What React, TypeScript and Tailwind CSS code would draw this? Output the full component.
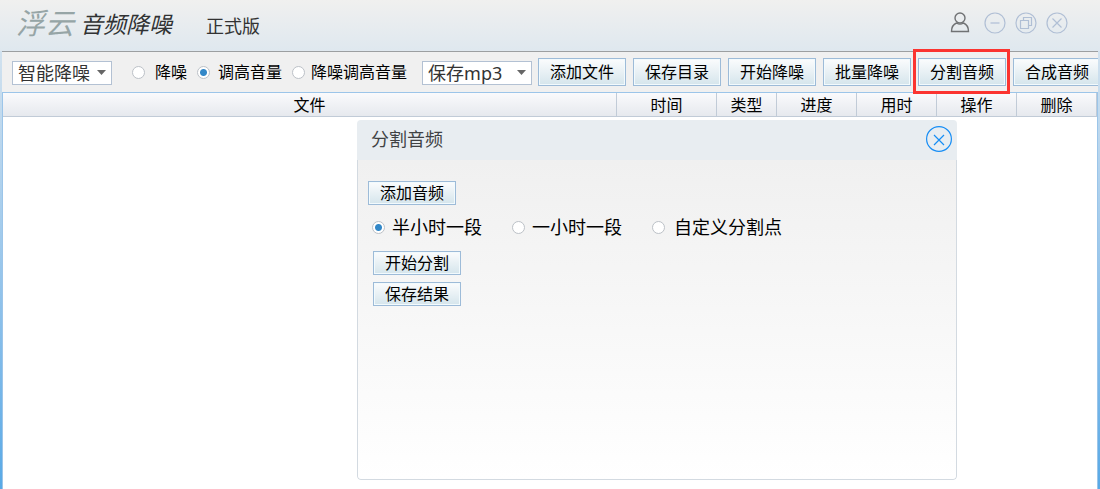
import { useState } from 'react';
import type { ReactNode } from 'react';
import clsx from 'clsx';

const columns = [
  { name: '文件', className: 'w-auto' },
  { name: '时间', className: 'w-[100px]' },
  { name: '类型', className: 'w-[60px]' },
  { name: '进度', className: 'w-[80px]' },
  { name: '用时', className: 'w-[80px]' },
  { name: '操作', className: 'w-[80px]' },
  { name: '删除', className: 'w-[80px]' },
];

const Button = ({ children, className }: { children: ReactNode; className?: string }) => (
  <button
    type="button"
    className={clsx(
      'w-[88px] shrink-0 border border-[#9dbbd8] bg-linear-to-b from-[#fbfcfd] to-[#d5e5ec] text-base leading-none text-black shadow-[inset_0_0_0_1px_#f2fafd]',
      className,
    )}
  >
    {children}
  </button>
);

type RadioProps = {
  name: string;
  label: string;
  checked: boolean;
  onChange: () => void;
  className?: string;
};

const Radio = ({ name, label, checked, onChange, className }: RadioProps) => (
  <label className={clsx('flex shrink-0 items-center whitespace-nowrap text-black', className)}>
    <input
      type="radio"
      name={name}
      checked={checked}
      onChange={onChange}
      className="size-[13px] shrink-0 appearance-none rounded-full border border-[#bcc1c7] bg-white checked:bg-[radial-gradient(circle,#3388c8_3px,#ffffff_4px)]"
    />
    {label}
  </label>
);

const Select = ({ label, options, className }: { label: string; options: string[]; className: string }) => (
  <div className={clsx('mt-0.5 grid h-6 shrink-0 items-center border border-[#b3c1d3] bg-white', className)}>
    <select
      aria-label={label}
      className="col-start-1 row-start-1 h-[22px] w-full appearance-none bg-transparent pl-[5px] text-lg leading-[22px] text-[#333] outline-none"
    >
      {options.map((option) => (
        <option key={option}>{option}</option>
      ))}
    </select>
    <svg
      className="pointer-events-none col-start-1 row-start-1 mr-[5px] mb-px h-[5px] w-[9px] justify-self-end"
      viewBox="0 0 9 5"
      fill="#666"
    >
      <path d="M0 0h9L4.500 5z" />
    </svg>
  </div>
);

const WindowControls = () => (
  <div className="mr-8 flex items-center gap-[9px] text-[#b0bfd5]">
    <button type="button" aria-label="用户" className="mr-[5px] text-[#707274]">
      <svg width="20" height="22" viewBox="0 0 20 22" fill="none" stroke="currentColor" strokeWidth="1.4">
        <circle cx="10" cy="6" r="5" />
        <path d="M6.500 11C3 12.500 1.500 15 1.500 19.500h17c0-4.500-1.500-7-5-8.500c-2 1.300-5 1.300-7 0z" />
      </svg>
    </button>
    <button type="button" aria-label="最小化">
      <svg width="22" height="22" viewBox="0 0 22 22" fill="none" stroke="currentColor" strokeWidth="1.200">
        <circle cx="11" cy="11" r="10" />
        <path d="M6.500 11h9" />
      </svg>
    </button>
    <button type="button" aria-label="最大化">
      <svg width="22" height="22" viewBox="0 0 22 22" fill="none" stroke="currentColor" strokeWidth="1.200">
        <circle cx="11" cy="11" r="10" />
        <path d="M5.500 8.500h8v8h-8zM8.500 8.500v-3h8v8h-3" />
      </svg>
    </button>
    <button type="button" aria-label="关闭">
      <svg width="22" height="22" viewBox="0 0 22 22" fill="none" stroke="currentColor" strokeWidth="1.200">
        <circle cx="11" cy="11" r="10" />
        <path d="M6.500 6.500l9 9m0-9l-9 9" />
      </svg>
    </button>
  </div>
);

const SplitDialog = ({ onClose }: { onClose: () => void }) => {
  const [segment, setSegment] = useState('半小时一段');

  return (
    <section
      role="dialog"
      aria-label="分割音频"
      className="absolute top-[27px] left-[354px] w-[600px] overflow-hidden rounded"
    >
      <header className="flex h-10 items-center justify-between bg-[#e8edf1] pr-[5px] pb-0.5 pl-3.5">
        <h2 className="text-lg leading-6 text-[#404244]">分割音频</h2>
        <button type="button" aria-label="关闭分割音频" onClick={onClose}>
          <svg width="26" height="26" viewBox="0 0 26 26" fill="none" stroke="#168df5" strokeWidth="1.200">
            <circle cx="13" cy="13" r="12.400" />
            <path d="M8 9l10 10m0-10L8 19" />
          </svg>
        </button>
      </header>
      <div className="min-h-80 rounded-b border border-t-0 border-[#d3dae1] bg-linear-to-b from-[#f0f0f0] to-white pt-[21px] pl-2.5">
        <Button className="h-6">添加音频</Button>
        <div className="mt-2 flex h-7 items-center pl-1 text-lg">
          {['半小时一段', '一小时一段', '自定义分割点'].map((item) => (
            <Radio
              key={item}
              name="segment"
              label={item}
              checked={segment === item}
              onChange={() => setSegment(item)}
              className="w-[140px] gap-[7px] last:gap-[9px]"
            />
          ))}
        </div>
        <div className="mt-2.5 flex flex-col items-start gap-[7px] pl-[5px]">
          <Button className="h-6">开始分割</Button>
          <Button className="h-6">保存结果</Button>
        </div>
      </div>
    </section>
  );
};

const App = () => {
  const [mode, setMode] = useState('调高音量');
  const [dialogOpen, setDialogOpen] = useState(true);

  return (
    <div className="flex min-h-screen flex-col bg-linear-to-b from-[#dfe8ef] to-[#58a9e6] px-0.5 font-['Noto_Sans','Noto_Sans_CJK_SC',sans-serif]">
      {/* Title bar */}
      <header className="-mx-0.5 flex h-[51px] items-center bg-linear-to-b from-[#f0f0ef] to-[#dfe8ef] pb-1.5">
        <h1 className="flex items-center gap-1.5 pl-4 italic">
          <span className="text-[29px] leading-9 text-[#96a5a6]">浮云</span>
          <span className="pt-0.5 text-[23px] leading-8 text-[#303233]">音频降噪</span>
        </h1>
        <span className="mt-1.5 ml-[34px] text-lg leading-6 text-[#333]">正式版</span>
        <div className="ml-auto">
          <WindowControls />
        </div>
      </header>

      {/* Toolbar */}
      <div className="flex h-[41px] items-center overflow-x-clip border-t border-[#9c9fa1] bg-[#f0f0f0] pl-2.5">
        <Select label="降噪方式" options={['智能降噪']} className="w-[100px]" />
        <div className="ml-5 flex items-center text-base">
          {['降噪', '调高音量', '降噪调高音量'].map((item) => (
            <Radio
              key={item}
              name="mode"
              label={item}
              checked={mode === item}
              onChange={() => setMode(item)}
              className="mr-2.5 gap-2 first:gap-2.5 last:mr-[15px] last:gap-1.5"
            />
          ))}
        </div>
        <Select label="保存格式" options={['保存mp3']} className="w-[110px]" />
        <div className="ml-1.5 flex gap-[7px]">
          <Button className="h-7">添加文件</Button>
          <Button className="h-7">保存目录</Button>
          <Button className="h-7">开始降噪</Button>
          <Button className="h-7">批量降噪</Button>
          <div className="relative flex" onClick={() => setDialogOpen(true)}>
            <Button className="h-7">分割音频</Button>
            <span className="pointer-events-none absolute -top-[9px] -right-1 -bottom-2 -left-[5px] z-10 border-3 border-[#fb3430]" />
          </div>
          <Button className="h-7">合成音频</Button>
        </div>
      </div>

      {/* File list */}
      <main className="relative flex-1 border-x border-t border-[#9cc5e9] bg-white">
        <table className="w-full table-fixed border-separate border-spacing-0 text-base text-black">
          <thead>
            <tr>
              {columns.map((col) => (
                <th
                  key={col.name}
                  className={clsx(
                    'h-6 border-r border-b border-[#c1cbd7] bg-linear-to-b from-[#fafafc] to-[#e6e9ee] p-0 pt-0.5 text-center leading-[21px] font-normal',
                    col.className,
                  )}
                >
                  {col.name}
                </th>
              ))}
            </tr>
          </thead>
        </table>
        {dialogOpen && <SplitDialog onClose={() => setDialogOpen(false)} />}
      </main>
    </div>
  );
};

export default App;
